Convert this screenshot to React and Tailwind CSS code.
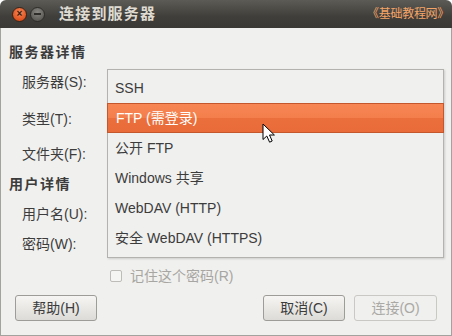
import React from 'react';

const menuItems = ['SSH', 'FTP (需登录)', '公开 FTP', 'Windows 共享', 'WebDAV (HTTP)', '安全 WebDAV (HTTPS)'];

function Cursor() {
  return (
    <svg className="absolute left-[262px] top-[123px]" width="14" height="21" viewBox="0 0 14 21">
      <path
        d="M1 1 L1 16.5 L4.8 13 L7.6 19.2 L10.2 18 L7.5 12 L12.4 12 Z"
        fill="#ffffff"
        stroke="#000000"
        strokeWidth="1"
        strokeLinejoin="round"
      />
    </svg>
  );
}

function App() {
  return (
    <div className="relative w-[452px] h-[336px] bg-white font-['Liberation_Sans','Noto_Sans_CJK_SC',sans-serif] text-[#3c3c3c] text-[14px]">
      <div className="flex flex-col h-full rounded-t-[6px] overflow-hidden">
        {/* title bar */}
        <div className="h-[28px] flex items-center bg-[linear-gradient(#5c5b55,#3f3e3a_60%,#3a3935)] pl-[12px] pr-[3px]">
          <div className="w-[15px] h-[15px] rounded-full bg-[radial-gradient(circle_at_50%_35%,#f88a5c,#e0531f_70%,#b8401a)] border border-[#3a2418] flex items-center justify-center text-[#3b1a0c] text-[10px] font-bold leading-none">
            ×
          </div>
          <div className="ml-[3px] w-[15px] h-[15px] rounded-full bg-[radial-gradient(circle_at_50%_35%,#8a8882,#5f5d58_70%,#4d4b47)] border border-[#2e2d2a] flex items-center justify-center">
            <div className="w-[7px] h-[2px] bg-[#2e2d2a]" />
          </div>
          <div className="ml-[14px] text-[15px] font-bold tracking-[1.2px] text-[#dfdbd2]">连接到服务器</div>
          <div className="ml-auto text-[12px] text-[#f4a466] tracking-[-0.3px]">《基础教程网》</div>
        </div>

        {/* body */}
        <div className="flex-1 bg-[#f0f0ee] border-x border-b border-[#a3a29e] flex flex-col">
          <div className="h-[14px]" />
          <div className="h-[20px] flex items-center pl-[8px] font-bold tracking-[1.5px]">服务器详情</div>
          <div className="h-[40px] flex items-center pl-[21px]">服务器(S):</div>
          <div className="h-[34px] flex items-center pl-[21px]">类型(T):</div>
          <div className="h-[36px] flex items-center pl-[21px]">文件夹(F):</div>
          <div className="h-[24px] flex items-center pl-[8px] font-bold tracking-[1.5px]">用户详情</div>
          <div className="h-[36px] flex items-center pl-[21px]">用户名(U):</div>
          <div className="h-[24px] flex items-center pl-[21px]">密码(W):</div>

          <div className="mt-[10px] h-[20px] flex items-center pl-[109px] text-[#a7a6a2]">
            <div className="w-[12px] h-[12px] rounded-[2px] border border-[#bdbcb8] bg-[#f5f5f3]" />
            <span className="ml-[8px]">记住这个密码(R)</span>
          </div>

          <div className="mt-[9px] flex items-center pl-[14px] pr-[14px]">
            <button className="w-[82px] h-[26px] rounded-[3px] border border-[#9d9c98] bg-[linear-gradient(#f6f5f3,#dcdbd7)] text-[#3c3c3c]">
              帮助(H)
            </button>
            <button className="ml-auto w-[82px] h-[26px] rounded-[3px] border border-[#9d9c98] bg-[linear-gradient(#f6f5f3,#dcdbd7)] text-[#3c3c3c]">
              取消(C)
            </button>
            <button className="ml-[9px] w-[83px] h-[26px] rounded-[3px] border border-[#c9c8c4] bg-[#f0f0ee] text-[#aaa9a5]">
              连接(O)
            </button>
          </div>
        </div>
      </div>

      {/* popup list */}
      <div className="absolute left-[107px] top-[69px] w-[337px] h-[189px] border border-[#b3b2ae] bg-[#f0f0ee] pt-[3px] shadow-[1px_1px_2px_rgba(0,0,0,0.15)]">
        {menuItems.map((item, i) =>
          i === 1 ? (
            <div
              key={item}
              className="h-[30px] flex items-center pl-[7px] text-white border border-[#c5572d] -mx-px bg-[linear-gradient(#f68653_0%,#f47f4d_50%,#eb6f3c_50%,#e86b39_100%)]"
            >
              <span className="pl-px">{item}</span>
            </div>
          ) : (
            <div key={item} className="h-[30px] flex items-center pl-[7px]">
              {item}
            </div>
          )
        )}
      </div>

      <Cursor />
    </div>
  );
}

export default App;
